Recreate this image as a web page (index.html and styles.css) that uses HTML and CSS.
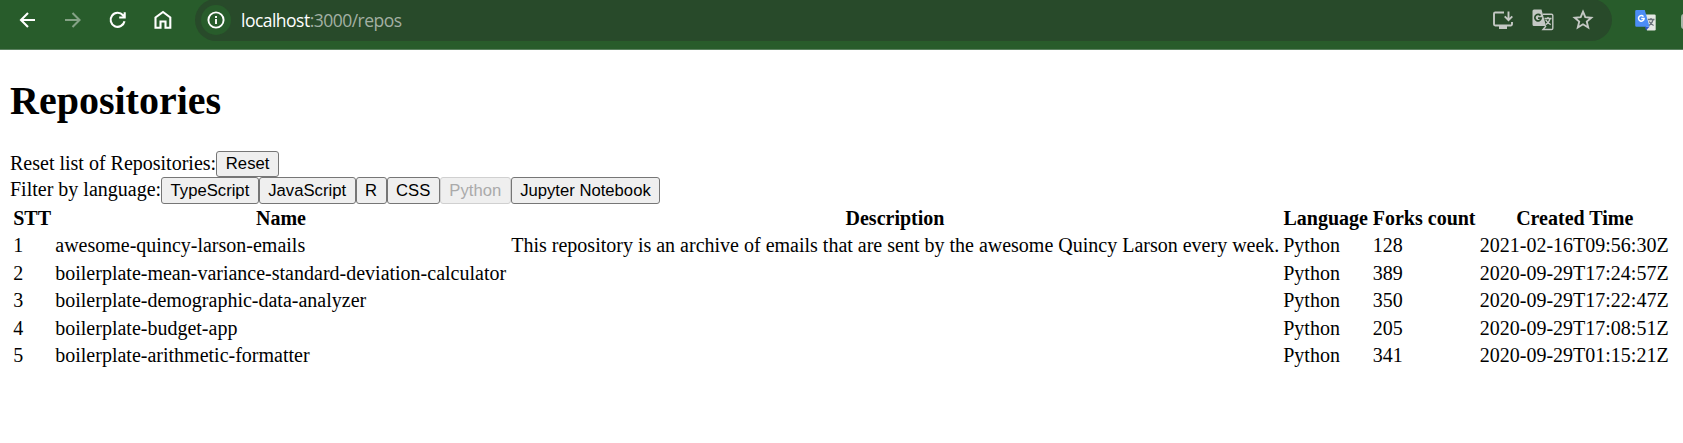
FILE: index.html
```
<!DOCTYPE html>
<html lang="en">
<head>
<meta charset="utf-8">
<title>Repositories</title>
<link rel="stylesheet" href="styles.css">
</head>
<body>
<header class="toolbar">
  <nav class="nav">
    <svg class="icon" viewBox="0 0 24 24"><path d="M19 12H5M12 5l-7 7 7 7"/></svg>
    <svg class="icon dim" viewBox="0 0 24 24"><path d="M4 12h14.500M11.500 5l7 7-7 7"/></svg>
    <svg class="icon" viewBox="0 0 24 24"><path d="M18.500 13.200A7 7 0 1 1 17 7.300L19.200 9.500M18.700 4.300v5.200h-5.500"/></svg>
    <svg class="icon" viewBox="0 0 24 24"><path d="M4.500 19.700V9.500L12 4l7.300 5.500v10.200h-4.800v-6.200H9.500v6.200z"/></svg>
  </nav>
  <div class="omnibox">
    <span class="site-info"><svg class="info" viewBox="0 0 18 18"><circle cx="9" cy="9" r="7.600"/><path d="M9 8v5M9 5v2"/></svg></span>
    <span class="url"><span class="host">localhost</span><span class="path">:3000/repos</span></span>
    <span class="actions">
      <svg class="action" viewBox="0 0 22 22"><path d="M12 3.500H3.200a1.200 1.200 0 0 0-1.200 1.200v10.600a1.200 1.200 0 0 0 1.200 1.200h15.600a1.200 1.200 0 0 0 1.200-1.200V13M16.500 2.500V11M12.700 7.300l3.800 3.800 3.800-3.800"/><path class="solid" d="M7 16h8v4H7z"/></svg>
      <svg class="action" viewBox="0 0 22 22"><path class="solid" d="M2 .5h7.500L14 17H2a1.500 1.500 0 0 1-1.500-1.500V2A1.500 1.500 0 0 1 2 .5z"/><path class="cut" d="M8.500 6.600a3.200 3.200 0 1 0 .7 2.600H6"/><path class="fine" d="M11 5.200h8.500a1.300 1.300 0 0 1 1.300 1.300v12.700a1.300 1.300 0 0 1-1.300 1.300H11L14 17M12.500 9.500h7M16 8v1.500M18.200 9.500c-.8 3-2.500 5-4.500 6.200M13.700 10.700c1.200 2.500 3 4 5 5"/></svg>
      <svg class="action" viewBox="0 0 22 22"><path d="M11 2.700l2.300 5.500 6 .5-4.500 3.900 1.400 5.900-5.200-3.200-5.200 3.200 1.400-5.900-4.500-3.900 6-.5z"/></svg>
    </span>
  </div>
  <svg class="extension" viewBox="0 0 22 22"><path fill="#e4e8e4" d="M9 4.500h10.500A1.200 1.200 0 0 1 20.700 5.700v13.600a1.200 1.200 0 0 1-1.200 1.200H12z"/><path fill="#2f56c8" d="M10 16.700h4.500L11 20.500z"/><path fill="#4c8df6" d="M1.500 0h8.300l4.700 16.700h-13A1.300 1.300 0 0 1 .2 15.400V1.300A1.300 1.300 0 0 1 1.500 0z"/><path fill="none" stroke="#fff" stroke-width="1.500" d="M8.500 6.600a2.800 2.800 0 1 0 .6 2H6.200"/><path fill="none" stroke="#687078" stroke-width="1.300" d="M13 9.500h6.500M16 8v1.500M18.200 9.500c-.6 2.500-2 4.500-4 6M14.300 11.500c1 2 2.500 3.200 4.300 4"/></svg>
  <span class="edge"></span>
</header>
<main class="page">
  <h1 class="title">Repositories</h1>
  <div class="controls">Reset list of Repositories:<button class="btn">Reset</button></div>
  <div class="controls filters">Filter by language:<button class="btn">TypeScript</button><button class="btn">JavaScript</button><button class="btn">R</button><button class="btn">CSS</button><button class="btn" disabled>Python</button><button class="btn">Jupyter Notebook</button></div>
  <table class="repos">
    <colgroup><col class="c-num"><col class="c-name"><col class="c-desc"><col class="c-lang"><col class="c-forks"><col class="c-time"></colgroup>
    <thead><tr><th>STT</th><th>Name</th><th>Description</th><th>Language</th><th>Forks count</th><th>Created Time</th></tr></thead>
    <tbody>
      <tr><td>1</td><td>awesome-quincy-larson-emails</td><td>This repository is an archive of emails that are sent by the awesome Quincy Larson every week.</td><td>Python</td><td>128</td><td>2021-02-16T09:56:30Z</td></tr>
      <tr><td>2</td><td>boilerplate-mean-variance-standard-deviation-calculator</td><td></td><td>Python</td><td>389</td><td>2020-09-29T17:24:57Z</td></tr>
      <tr><td>3</td><td>boilerplate-demographic-data-analyzer</td><td></td><td>Python</td><td>350</td><td>2020-09-29T17:22:47Z</td></tr>
      <tr><td>4</td><td>boilerplate-budget-app</td><td></td><td>Python</td><td>205</td><td>2020-09-29T17:08:51Z</td></tr>
      <tr><td>5</td><td>boilerplate-arithmetic-formatter</td><td></td><td>Python</td><td>341</td><td>2020-09-29T01:15:21Z</td></tr>
    </tbody>
  </table>
</main>
</body>
</html>
```
FILE: styles.css
```
* { box-sizing: border-box; }
body { margin: 0; background: #fff; color: #000; font: 20px/23px "Liberation Serif", serif; overflow: hidden; }
.toolbar { display: flex; align-items: flex-start; height: 50px; background: #285c2b; border-bottom: 1px solid #5b8160; overflow: hidden; }
.nav { display: flex; flex: none; gap: 21px; width: 195px; padding: 8px 0 0 16px; }
.icon { flex: none; width: 24px; height: 24px; fill: none; stroke: #fff; stroke-width: 2.1; }
.dim { stroke: #85a286; }
.omnibox { display: flex; flex: none; align-items: center; width: 1417px; height: 42px; margin-top: -1px; padding: 0 18px 0 6px; border-radius: 21px; background: #284a2a; }
.site-info { display: flex; align-items: center; justify-content: center; width: 30px; height: 30px; border-radius: 50%; background: #285c2b; }
.info { width: 18px; height: 18px; fill: none; stroke: #fff; stroke-width: 1.9; }
.url { margin-left: 10px; font: 17.5px/24px "Open Sans", sans-serif; letter-spacing: -0.52px; white-space: nowrap; }
.host { color: #fff; }
.path { color: #a3b0a3; }
.actions { display: flex; gap: 18px; margin-left: auto; }
.action { width: 22px; height: 22px; fill: none; stroke: #c4c8c4; stroke-width: 1.9; }
.action .solid { fill: #c4c8c4; stroke: none; }
.action .cut { stroke: #284a2a; stroke-width: 1.700; }
.action .fine { stroke-width: 1.400; }
.extension { flex: none; width: 22px; height: 22px; margin: 10px 0 0 23px; }
.edge { flex: none; width: 14px; height: 15px; margin: 14px 0 0 24px; border: 2px solid #a8b8a9; border-radius: 3px; }
.page { padding: 0 10px; }
.title { margin: 28px 0 27px; font-size: 40px; line-height: 46px; }
.controls { display: flex; align-items: flex-start; height: 26px; line-height: 24px; white-space: nowrap; }
.btn { height: 26px; margin: 0; padding: 0 8.75px; border: 1px solid #767676; border-radius: 3px; background: #efefef; color: #000; font: 16.667px/20px "Liberation Sans", sans-serif; }
.filters { height: 27px; }
.filters .btn { height: 27px; padding: 0 8.5px; }
.btn:disabled { border-color: #d0d0d0; color: #aaa; }
.repos { width: 1663px; table-layout: fixed; border-collapse: separate; border-spacing: 2.5px 0; white-space: nowrap; }
.repos th, .repos td { height: 27px; padding: 3px 1.25px 0; vertical-align: top; }
.repos tbody tr:nth-child(odd) td { height: 28px; }
.repos td { text-align: left; }
.c-num { width: 40px; }
.c-name { width: 454px; }
.c-desc { width: 770px; }
.c-lang { width: 87.5px; }
.c-forks { width: 105px; }
```
